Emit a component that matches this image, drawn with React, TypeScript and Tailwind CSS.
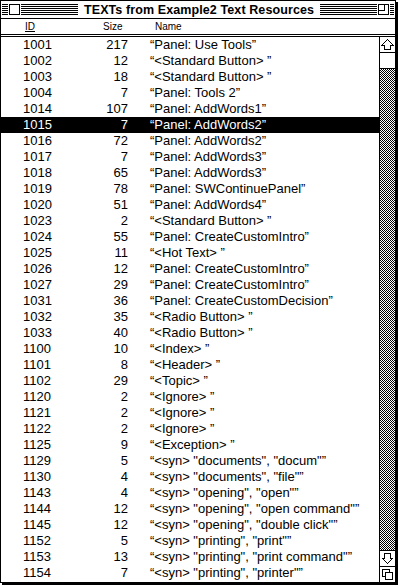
import React from "react";

const rows: [string, string, string][] = [
  ["1001", "217", "“Panel: Use Tools”"],
  ["1002", "12", "“<Standard Button> ”"],
  ["1003", "18", "“<Standard Button> ”"],
  ["1004", "7", "“Panel: Tools 2”"],
  ["1014", "107", "“Panel: AddWords1”"],
  ["1015", "7", "“Panel: AddWords2”"],
  ["1016", "72", "“Panel: AddWords2”"],
  ["1017", "7", "“Panel: AddWords3”"],
  ["1018", "65", "“Panel: AddWords3”"],
  ["1019", "78", "“Panel: SWContinuePanel”"],
  ["1020", "51", "“Panel: AddWords4”"],
  ["1023", "2", "“<Standard Button> ”"],
  ["1024", "55", "“Panel: CreateCustomIntro”"],
  ["1025", "11", "“<Hot Text> ”"],
  ["1026", "12", "“Panel: CreateCustomIntro”"],
  ["1027", "29", "“Panel: CreateCustomIntro”"],
  ["1031", "36", "“Panel: CreateCustomDecision”"],
  ["1032", "35", "“<Radio Button> ”"],
  ["1033", "40", "“<Radio Button> ”"],
  ["1100", "10", "“<Index> ”"],
  ["1101", "8", "“<Header> ”"],
  ["1102", "29", "“<Topic> ”"],
  ["1120", "2", "“<Ignore> ”"],
  ["1121", "2", "“<Ignore> ”"],
  ["1122", "2", "“<Ignore> ”"],
  ["1125", "9", "“<Exception> ”"],
  ["1129", "5", "“<syn> \"documents\", \"docum\"”"],
  ["1130", "4", "“<syn> \"documents\", \"file\"”"],
  ["1143", "4", "“<syn> \"opening\", \"open\"”"],
  ["1144", "12", "“<syn> \"opening\", \"open command\"”"],
  ["1145", "12", "“<syn> \"opening\", \"double click\"”"],
  ["1152", "5", "“<syn> \"printing\", \"print\"”"],
  ["1153", "13", "“<syn> \"printing\", \"print command\"”"],
  ["1154", "7", "“<syn> \"printing\", \"printer\"”"],
];

function Stripes({ className }: { className: string }) {
  return (
    <div
      className={
        "h-[11px] bg-[repeating-linear-gradient(to_bottom,#000_0px,#000_1px,#fff_1px,#fff_2px)] " +
        className
      }
    />
  );
}

export default function App() {
  return (
    <div className="w-[398px] h-[585px] bg-white font-['Liberation_Sans',Arial,sans-serif] text-black">
      <div className="w-[396px] h-[583px] border border-black bg-white shadow-[2px_2px_0_#000] flex flex-col">
        {/* Title bar */}
        <div className="h-[18px] border-b border-black flex items-center px-[1px] shrink-0">
          <Stripes className="w-[6px]" />
          <div className="w-[13px] h-[13px] bg-white flex items-center justify-center">
            <div className="w-[11px] h-[11px] border border-black" />
          </div>
          <Stripes className="flex-1" />
          <div className="px-[6px] text-[12.5px] font-bold leading-[16px] whitespace-nowrap tracking-[0.1px]">
            TEXTs from Example2 Text Resources
          </div>
          <Stripes className="flex-1" />
          <div className="w-[13px] h-[13px] bg-white flex items-center justify-center">
            <svg width="11" height="11" viewBox="0 0 11 11" shapeRendering="crispEdges">
              <rect x="0.5" y="0.5" width="10" height="10" fill="#fff" stroke="#000" />
              <path d="M0.5 6.5 H6.5 V0.5" fill="none" stroke="#000" />
            </svg>
          </div>
          <Stripes className="w-[4px]" />
        </div>

        {/* Column header */}
        <div className="h-[15px] relative shrink-0 text-[10px] leading-[15px]">
          <span className="absolute left-[24px] top-0 underline underline-offset-[1px]">ID</span>
          <span className="absolute left-[102px] top-0">Size</span>
          <span className="absolute left-[154px] top-0">Name</span>
        </div>
        <div className="h-[3px] border-t border-b border-black shrink-0" />

        {/* Body */}
        <div className="flex-1 flex min-h-0">
          <div className="flex-1 flex flex-col text-[13px] leading-[16px]">
            {rows.map(([id, size, name]) => {
              const sel = id === "1015";
              return (
                <div
                  key={id}
                  className={
                    "h-[16px] flex whitespace-nowrap " + (sel ? "bg-black text-white" : "")
                  }
                >
                  <span className="w-[60px] pl-[22px]">{id}</span>
                  <span className="w-[67px] text-right">{size}</span>
                  <span className="pl-[22px]">{name}</span>
                </div>
              );
            })}
          </div>

          {/* Scrollbar */}
          <div className="w-[16px] border-l border-black flex flex-col shrink-0">
            <div className="h-[16px] border-b border-black flex items-center justify-center">
              <svg width="15" height="15" viewBox="0 0 15 15" shapeRendering="crispEdges">
                <path d="M7.5 2.5 L13 8 H10.5 V12.5 H4.5 V8 H2 Z" fill="#fff" stroke="#000" />
              </svg>
            </div>
            <div className="h-[16px] border-b border-black bg-white" />
            <div className="flex-1 bg-[repeating-conic-gradient(#000_0_25%,#fff_0_50%)] bg-size-[2px_2px]" />
            <div className="h-[16px] border-t border-black flex items-center justify-center">
              <svg width="15" height="15" viewBox="0 0 15 15" shapeRendering="crispEdges">
                <path d="M7.5 12.5 L13 7 H10.5 V2.5 H4.5 V7 H2 Z" fill="#fff" stroke="#000" />
              </svg>
            </div>
            <div className="h-[16px] border-t border-black flex items-center justify-center">
              <svg width="15" height="15" viewBox="0 0 15 15" shapeRendering="crispEdges">
                <rect x="2.5" y="2.5" width="7" height="7" fill="#fff" stroke="#000" />
                <rect x="5.5" y="5.5" width="7" height="7" fill="#fff" stroke="#000" />
              </svg>
            </div>
          </div>
        </div>
      </div>
    </div>
  );
}
